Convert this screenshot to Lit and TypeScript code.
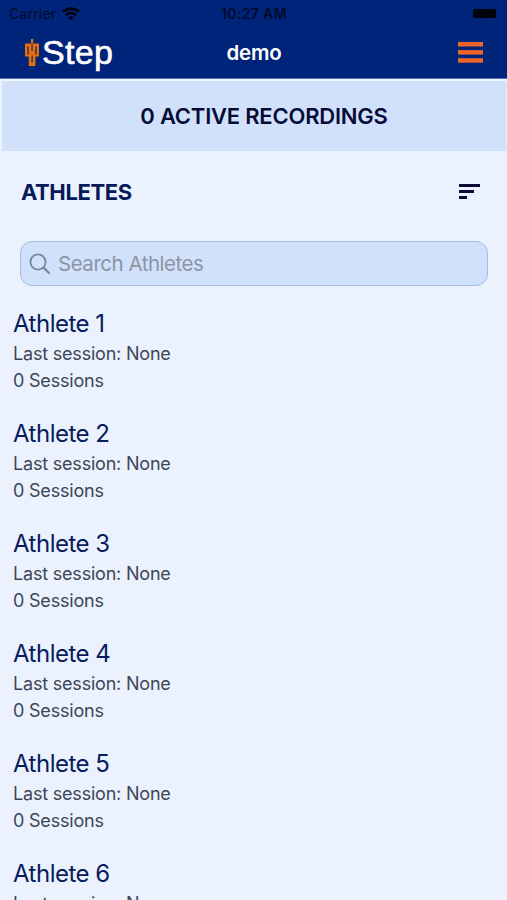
import { LitElement, html, css } from "lit";
import { customElement, property } from "lit/decorators.js";

@customElement("status-bar")
class StatusBar extends LitElement {
  static styles = css`
    :host {
      display: grid;
      grid-template-columns: 1fr auto 1fr;
      align-items: center;
      height: 27px;
      padding: 0 11px 0 9px;
      color: #020a2a;
      font-size: 14px;
      line-height: 27px;
    }
    .left { display: flex; align-items: center; gap: 6px; }
    .carrier { letter-spacing: 0.2px; }
    .time { font-weight: 600; letter-spacing: 0.35px; padding-left: 3px; }
    .battery {
      justify-self: end;
      width: 23px;
      height: 9px;
      border-radius: 2px;
      background: #00020c;
    }
    svg { display: block; }
  `;
  render() {
    return html`
      <div class="left">
        <span class="carrier">Carrier</span>
        <svg width="18" height="14" viewBox="0 0 18 14" fill="none" stroke="#00030f" stroke-width="2.6">
          <path d="M1 4.8C5.6 0.5 12.4 0.5 17 4.8" />
          <path d="M4 8.1C6.9 5.4 11.1 5.4 14 8.1" />
          <path d="M6.3 10.2C7.8 8.8 10.2 8.8 11.7 10.2L9 12.9Z" fill="#00030f" stroke="none" />
        </svg>
      </div>
      <span class="time">10:27 AM</span>
      <span class="battery"></span>
    `;
  }
}

@customElement("nav-bar")
class NavBar extends LitElement {
  static styles = css`
    :host {
      display: grid;
      grid-template-columns: 1fr auto 1fr;
      align-items: center;
      height: 51px;
      padding: 0 24px 0 24px;
      color: #fff;
    }
    .brand { display: flex; align-items: center; gap: 2px; }
    .name {
      font-family: "Liberation Sans", sans-serif;
      font-size: 34px;
      line-height: 51px;
      letter-spacing: 0.3px;
      -webkit-text-stroke: 0.6px #fff;
    }
    .title { font-size: 20.5px; line-height: 51px; font-weight: 600; letter-spacing: -0.2px; padding-left: 1px; }
    .menu { justify-self: end; }
    svg { display: block; }
  `;
  render() {
    return html`
      <div class="brand">
        <svg width="16" height="28" viewBox="0 0 16 28" fill="#e8700c">
          <rect x="7" y="0" width="2.2" height="4.5" />
          <path
            fill-rule="evenodd"
            d="M1 4.5H15V17.5H11.4V27H4.8V17.5H1ZM3.4 7.5V15.5H4.6V7.5ZM7.5 4.5V12H8.6V4.5ZM11.4 7.5V15.5H12.6V7.5ZM7.5 16.5V23.5H8.7V16.5Z"
          />
        </svg>
        <span class="name">Step</span>
      </div>
      <span class="title">demo</span>
      <svg class="menu" width="25" height="21" viewBox="0 0 25 21" fill="#ee6429">
        <rect width="25" height="4.5" />
        <rect y="8.1" width="25" height="4.5" />
        <rect y="16.2" width="25" height="4.5" />
      </svg>
    `;
  }
}

@customElement("search-field")
class SearchField extends LitElement {
  @property() placeholder = "";
  static styles = css`
    :host {
      display: flex;
      align-items: center;
      gap: 7px;
      box-sizing: border-box;
      height: 45px;
      padding-left: 8px;
      border: 1.5px solid #a3bbdd;
      border-radius: 12px;
      background: #d1e1fb;
      color: #8b95a3;
      font-size: 20.5px;
      letter-spacing: -0.48px;
    }
    svg { display: block; }
  `;
  render() {
    return html`
      <svg width="22" height="22" viewBox="0 0 22 22" fill="none" stroke="#78869d" stroke-width="1.8">
        <circle cx="9" cy="9" r="7.6" />
        <path d="M14.5 14.5L20.5 20.5" stroke-width="2.2" />
      </svg>
      <span>${this.placeholder}</span>
    `;
  }
}

@customElement("athlete-item")
class AthleteItem extends LitElement {
  @property() name = "";
  @property() last = "None";
  @property({ type: Number }) sessions = 0;
  static styles = css`
    :host { display: block; height: 110px; padding-left: 13px; }
    .name { color: #071c5c; font-size: 24px; line-height: 32px; letter-spacing: -0.5px; }
    .meta { color: #3d4657; font-size: 18px; line-height: 27px; letter-spacing: -0.2px; }
  `;
  render() {
    return html`
      <div class="name">${this.name}</div>
      <div class="meta">Last session: ${this.last}</div>
      <div class="meta">${this.sessions} Sessions</div>
    `;
  }
}

@customElement("app-root")
class AppRoot extends LitElement {
  static styles = css`
    :host {
      display: block;
      height: 900px;
      overflow: hidden;
      background: #ebf2fe;
      font-family: Inter, "Liberation Sans", sans-serif;
      white-space: nowrap;
    }
    header { background: #002479; border-bottom: 1px solid #5270ae; }
    .banner {
      display: flex;
      align-items: center;
      justify-content: center;
      box-sizing: border-box;
      height: 72px;
      margin: 0 1px 0 2px;
      padding-left: 20px;
      border-top: 2px solid #f0f6ff;
      background: #d1e1fa;
      color: #070c36;
      font-size: 22px;
      font-weight: 600;
      letter-spacing: -0.22px;
    }
    .section {
      display: flex;
      align-items: center;
      justify-content: space-between;
      height: 81px;
      padding: 0 27px 0 21px;
    }
    h2 { margin: 0; color: #071a58; font-size: 22px; font-weight: 700; letter-spacing: -0.4px; }
    .sort { display: flex; flex-direction: column; gap: 3px; width: 21px; }
    .sort i { display: block; height: 3px; background: #0b0b35; }
    .sort i:nth-child(2) { width: 15px; }
    .sort i:nth-child(3) { width: 8px; }
    search-field { margin: 9px 19px 0 20px; }
    .list { padding-top: 22px; }
  `;
  render() {
    return html`
      <header>
        <status-bar></status-bar>
        <nav-bar></nav-bar>
      </header>
      <div class="banner">0 ACTIVE RECORDINGS</div>
      <div class="section">
        <h2>ATHLETES</h2>
        <div class="sort"><i></i><i></i><i></i></div>
      </div>
      <search-field placeholder="Search Athletes"></search-field>
      <div class="list">
        ${[1, 2, 3, 4, 5, 6].map((n) => html`<athlete-item name="Athlete ${n}"></athlete-item>`)}
      </div>
    `;
  }
}
